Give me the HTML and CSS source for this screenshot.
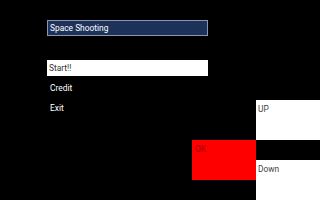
FILE: index.html
```html
<!DOCTYPE html>
<html lang="en">
<head>
    <meta charset="UTF-8">
    <meta name="viewport" content="width=device-width, initial-scale=1.0">
    <title>Space Shooting</title>
    <link rel="stylesheet" href="styles.css">
</head>
<body>
    <div class="screen">
        <div class="menu">
            <div class="title">Space Shooting</div>
            <div class="menu-list">
                <div class="menu-item selected">Start!!</div>
                <div class="menu-item">Credit</div>
                <div class="menu-item">Exit</div>
            </div>
        </div>

        <!-- on-screen controls -->
        <div class="pad">
            <button class="pad-btn up">UP</button>
            <button class="pad-btn ok">OK</button>
            <button class="pad-btn down">Down</button>
        </div>
    </div>
</body>
</html>
```

FILE: styles.css
```css
* {
    margin: 0;
    padding: 0;
    box-sizing: border-box;
}

body {
    font-family: Roboto, 'Liberation Sans', Arial, sans-serif;
    font-size: 8.4px;
    background-color: #000;
    color: #fff;
}

.screen {
    display: grid;
    width: 320px;
    height: 200px;
}

.menu,
.pad {
    grid-area: 1 / 1;
}

.menu {
    align-self: start;
    justify-self: start;
    width: 161px;
    margin: 20px 0 0 47px;
}

.title {
    height: 16px;
    line-height: 14px;
    padding: 0 2px;
    background: #1d3259;
    border: 1px solid #8b95ad;
    color: #fff;
}

.menu-list {
    display: flex;
    flex-direction: column;
    gap: 4px;
    margin-top: 24px;
}

.menu-item {
    height: 16px;
    line-height: 16px;
    padding: 0 3px;
}

.menu-item.selected {
    background: #fff;
    color: #333;
    padding: 0 2px;
}

.pad {
    align-self: end;
    justify-self: end;
    display: grid;
    grid-template-columns: 64px 64px;
    grid-template-rows: repeat(5, 20px);
}

.pad-btn {
    border: none;
    font-family: inherit;
    font-size: 8.4px;
    text-align: left;
    display: flex;
    align-items: flex-start;
    padding: 4px 2px;
    background: #fff;
    color: #444;
}

.up {
    grid-column: 2;
    grid-row: 1 / 3;
}

.ok {
    grid-column: 1;
    grid-row: 3 / 5;
    background: #ff0000;
    color: #a00000;
    padding-left: 3px;
}

.down {
    grid-column: 2;
    grid-row: 4 / 6;
}
```
